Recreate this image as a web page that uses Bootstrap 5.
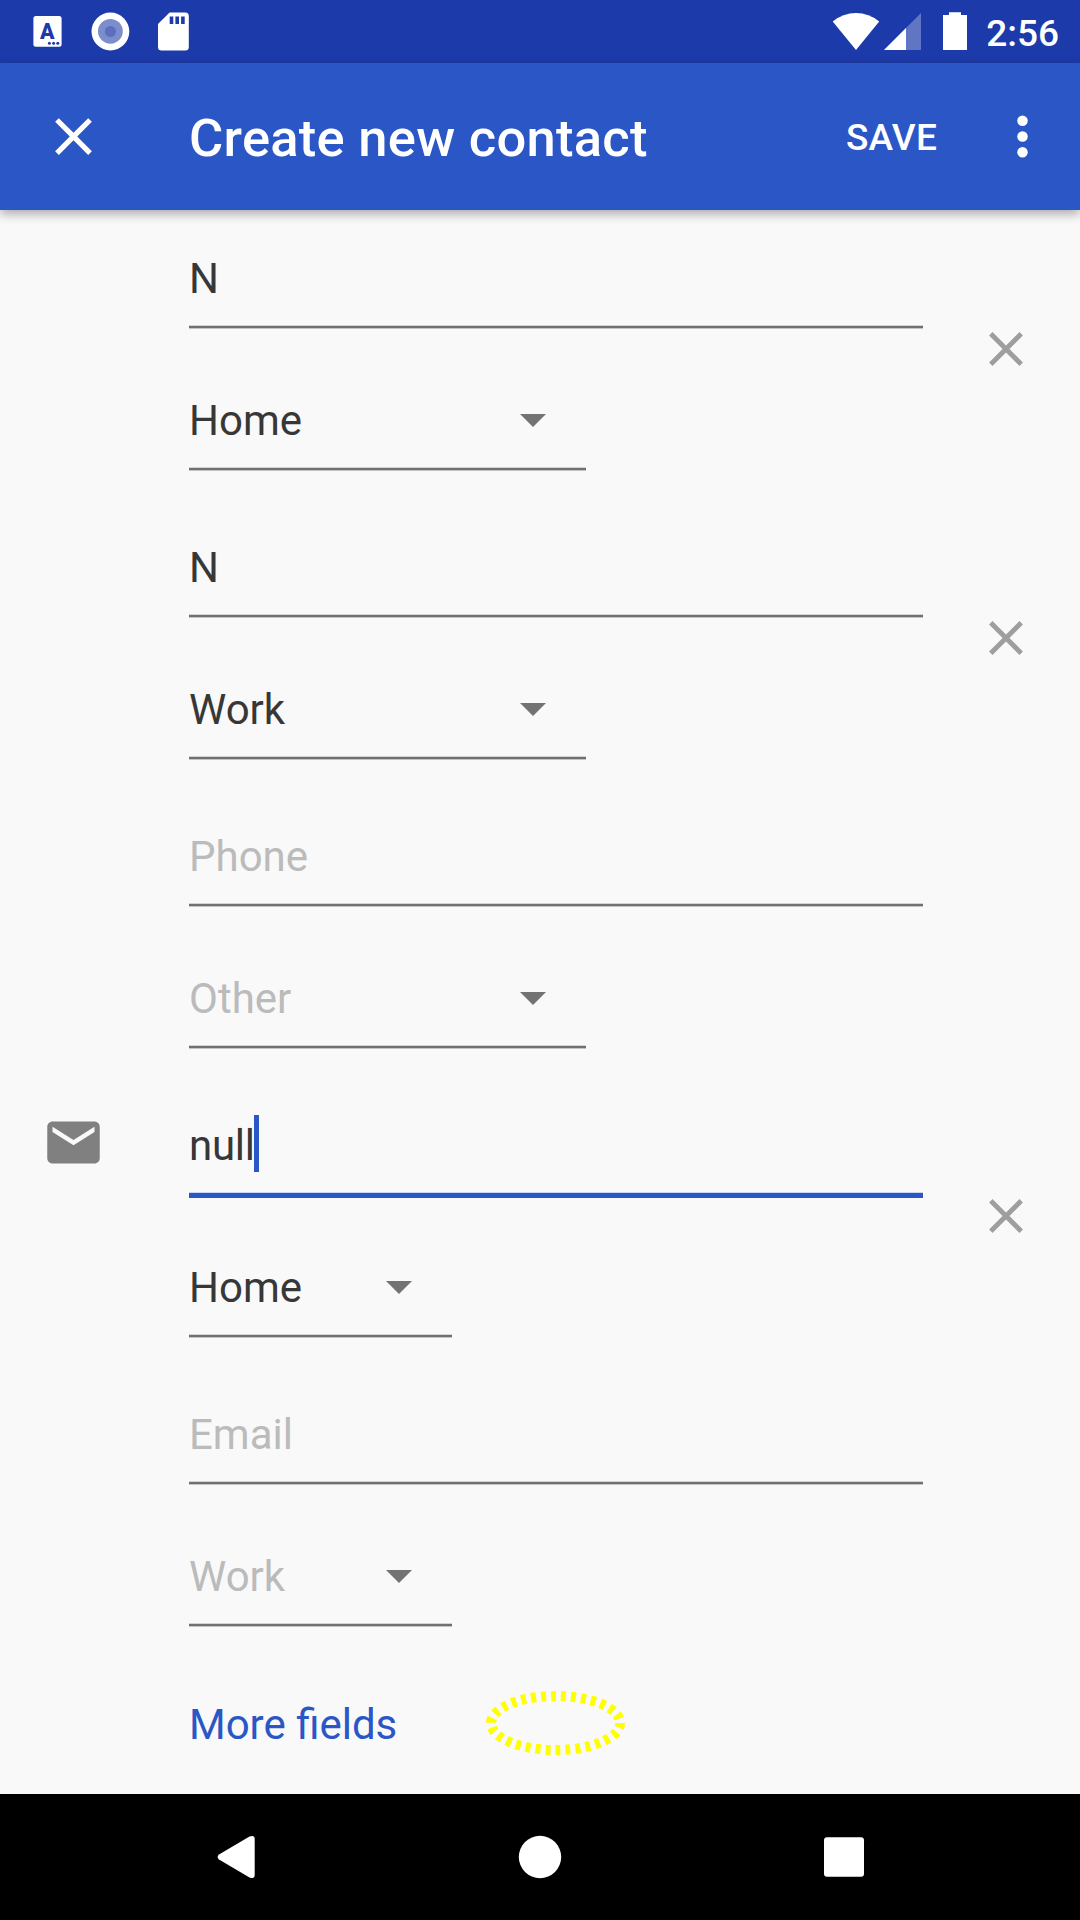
<!DOCTYPE html>
<html lang="en">
<head>
<meta charset="utf-8">
<meta name="viewport" content="width=device-width, initial-scale=1">
<title>Create new contact</title>
<link href="https://cdn.jsdelivr.net/npm/bootstrap@5.3.0/dist/css/bootstrap.min.css" rel="stylesheet">
<style>
  body { font-family: Roboto, "Liberation Sans", sans-serif; background: #f9f9f9; color: #373737; font-size: 42px; }
  .screen { width: 1080px; height: 1920px; }
  svg { display: block; flex: none; }
  .status-bar { height: 63px; background: #1c3aa9; color: #fff; padding: 0 21px 0 33px; }
  .clock { font-size: 37px; font-weight: 500; line-height: 68px; margin-left: 19px; }
  .app-bar { height: 147px; background: #2a56c6; color: #fff; padding: 0 26px 0 42px; box-shadow: 0 4px 10px rgba(0,0,0,.32); z-index: 1; }
  .app-title { font-size: 52.5px; font-weight: 500; line-height: 147px; padding-top: 4px; margin-left: 84px; letter-spacing: .27px; }
  .save-btn { font-size: 37px; font-weight: 500; line-height: 147px; padding-top: 1px; letter-spacing: .2px; }
  .overflow-icon { margin-left: 54px; }
  .form-area { padding-top: 19px; }
  .entry { height: 242px; margin-bottom: 47px; }
  .lead-col { width: 189px; padding: 15px 0 0 42px; }
  .fields { width: 734px; }
  .field { height: 100px; line-height: 100px; margin-bottom: 42px; padding-right: 40px;
    background: linear-gradient(#d4d4d4 1px, #707070 1px, #707070 3px, #c4c4c4 3px) bottom / 100% 4px no-repeat; }
  .field.active { height: 102px; margin-bottom: 40px; letter-spacing: -.3px;
    background: linear-gradient(#ccd6f0 1px, #2a56c6 1px) bottom / 100% 6px no-repeat; }
  .wide { width: 397px; }
  .narrow { width: 263px; }
  .hint { color: #bbb; }
  .caret { width: 5px; height: 57px; background: #2a56c6; margin: 19px 0 0 -1px; }
  .arrow { margin-top: 43px; }
  .remove { margin: 91px 0 0 54.2px; }
  .more { padding-left: 189px; color: #2a56c6; line-height: 102px; }
  .more-label { width: 207px; white-space: nowrap; }
  .marker { margin: 15px 0 0 89px; }
  .nav-keys { height: 126px; background: #000; padding-left: 217px; }
</style>
</head>
<body>
<svg width="0" height="0" class="position-absolute">
  <symbol id="close" viewBox="0 0 24 24"><path d="M19 6.41L17.59 5 12 10.59 6.41 5 5 6.41 10.59 12 5 17.59 6.41 19 12 13.41 17.59 19 19 17.59 13.41 12z"/></symbol>
  <symbol id="down" viewBox="0 0 26 13"><path d="M0 0H26L13 13z"/></symbol>
</svg>
<div class="screen d-flex flex-column overflow-hidden">
  <header class="status-bar d-flex flex-shrink-0">
    <svg width="156" height="63" viewBox="33 0 156 63" fill="#fff">
      <rect x="33.4" y="16" width="28.2" height="30.7" rx="2.5"/>
      <text x="47.3" y="38.5" font-size="22" font-weight="900" text-anchor="middle" textLength="14.5" lengthAdjust="spacingAndGlyphs" fill="#1c3aa9">A</text>
      <g fill="#1c3aa9"><circle cx="49.4" cy="43.2" r="1.5"/><circle cx="53.6" cy="43.2" r="1.5"/><circle cx="57.8" cy="43.2" r="1.5"/></g>
      <circle cx="110.4" cy="31.5" r="18.9"/><circle cx="110.4" cy="31.3" r="12.4" fill="#7c8dcb"/><circle cx="110.4" cy="31.5" r="5.5" fill="#5a6fbe"/>
      <path d="M169.6 12.5H185.3a3.5 3.5 0 0 1 3.5 3.5V47a3.5 3.5 0 0 1-3.5 3.5H161.5A3.5 3.5 0 0 1 158 47V24z"/>
      <path d="M169.7 16.4h3.6V24h-3.6zM175.4 16.4H179V24h-3.6zM181.1 16.4h3.6V24h-3.6z" fill="#1c3aa9"/>
    </svg>
    <svg class="ms-auto" width="135" height="63" viewBox="832 0 135 63" fill="#fff">
      <path d="M832.7 21.5Q843 13 856 13T879.2 21.5L856 50z"/>
      <path d="M884 50L921 13V50z" opacity=".3"/><path d="M884 50L906 28V50z"/>
      <path d="M949 12.2h12V15h6v35h-24V15h6z"/>
    </svg>
    <div class="clock">2:56</div>
  </header>
  <nav class="app-bar d-flex align-items-center flex-shrink-0 position-relative">
    <svg width="63" height="63" fill="#fff"><use href="#close"/></svg>
    <div class="app-title">Create new contact</div>
    <div class="save-btn ms-auto">SAVE</div>
    <svg class="overflow-icon" width="63" height="63" viewBox="0 0 24 24" fill="#fff"><circle cx="12" cy="6" r="2"/><circle cx="12" cy="12" r="2"/><circle cx="12" cy="18" r="2"/></svg>
  </nav>
  <main class="form-area flex-grow-1">
    <section class="entry d-flex">
      <div class="lead-col"></div>
      <div class="fields">
        <div class="field">N</div>
        <div class="field wide d-flex justify-content-between">Home<svg class="arrow" width="26" height="13" fill="#737373"><use href="#down"/></svg></div>
      </div>
      <svg class="remove" width="58" height="58" fill="#9e9e9e"><use href="#close"/></svg>
    </section>
    <section class="entry d-flex">
      <div class="lead-col"></div>
      <div class="fields">
        <div class="field">N</div>
        <div class="field wide d-flex justify-content-between">Work<svg class="arrow" width="26" height="13" fill="#737373"><use href="#down"/></svg></div>
      </div>
      <svg class="remove" width="58" height="58" fill="#9e9e9e"><use href="#close"/></svg>
    </section>
    <section class="entry d-flex">
      <div class="lead-col"></div>
      <div class="fields">
        <div class="field hint">Phone</div>
        <div class="field wide hint d-flex justify-content-between">Other<svg class="arrow" width="26" height="13" fill="#737373"><use href="#down"/></svg></div>
      </div>
    </section>
    <section class="entry d-flex">
      <div class="lead-col"><svg width="63" height="63" viewBox="0 0 24 24" fill="#808080"><path d="M20 4H4c-1.1 0-1.99.9-1.99 2L2 18c0 1.1.9 2 2 2h16c1.1 0 2-.9 2-2V6c0-1.1-.9-2-2-2zm0 4l-8 5-8-5V6l8 5 8-5v2z"/></svg></div>
      <div class="fields">
        <div class="field active d-flex">null<span class="caret"></span></div>
        <div class="field narrow d-flex justify-content-between">Home<svg class="arrow" width="26" height="13" fill="#737373"><use href="#down"/></svg></div>
      </div>
      <svg class="remove" width="58" height="58" fill="#9e9e9e"><use href="#close"/></svg>
    </section>
    <section class="entry d-flex">
      <div class="lead-col"></div>
      <div class="fields">
        <div class="field hint">Email</div>
        <div class="field narrow hint d-flex justify-content-between">Work<svg class="arrow" width="26" height="13" fill="#737373"><use href="#down"/></svg></div>
      </div>
    </section>
    <div class="more d-flex"><span class="more-label">More fields</span>
      <svg class="marker" width="142" height="68" viewBox="485 1689 142 68"><ellipse cx="555.6" cy="1723" rx="64.6" ry="27" fill="none" stroke="#ff0" stroke-width="10" stroke-dasharray="5 5"/></svg>
    </div>
  </main>
  <footer class="nav-keys d-flex flex-shrink-0">
    <svg width="648" height="126" viewBox="217 1794 648 126" fill="#fff">
      <path d="M219 1854.5L249.5 1836.600Q254.700 1834.500 254.700 1839V1875Q254.700 1879.500 249.500 1877.400L219 1859.500Q216.200 1857 219 1854.500z"/>
      <circle cx="540" cy="1857" r="21.2"/>
      <rect x="824" y="1837.200" width="40" height="39.600" rx="3"/>
    </svg>
  </footer>
</div>
<script src="https://cdn.jsdelivr.net/npm/bootstrap@5.3.0/dist/js/bootstrap.bundle.min.js"></script>
</body>
</html>
